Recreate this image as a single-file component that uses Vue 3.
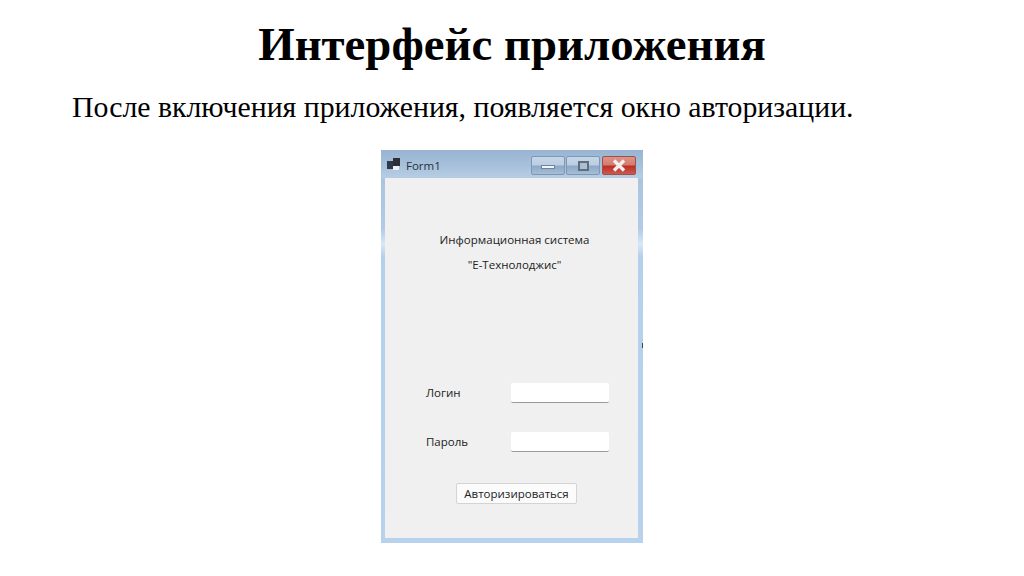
<script setup>
const heading = 'Интерфейс приложения'
const intro = 'После включения приложения, появляется окно авторизации.'
</script>

<template>
  <main class="slide">
    <h1 class="heading">{{ heading }}</h1>
    <p class="intro">{{ intro }}</p>
    <section class="window">
      <header class="titlebar">
        <svg class="app-icon" width="14" height="13" viewBox="0 0 14 13">
          <rect x="0" y="3" width="6" height="8" fill="#2e3a4c" />
          <rect x="6" y="0" width="7" height="8" fill="#2b2f3a" />
          <rect x="6" y="8" width="6" height="4" fill="#eef2f6" />
        </svg>
        <span class="title">Form1</span>
        <div class="controls">
          <span class="ctl"><i class="min"></i></span>
          <span class="ctl"><i class="max"></i></span>
          <span class="ctl close">
            <svg width="18" height="13" viewBox="0 0 18 13">
              <path d="M4 1.5 L14 11.5 M14 1.5 L4 11.5" stroke="#f4eeee" stroke-width="3.4" />
            </svg>
          </span>
        </div>
      </header>
      <div class="client">
        <div class="caption">
          <div>Информационная система</div>
          <div>"Е-Технолоджис"</div>
        </div>
        <div class="row row-login">
          <label>Логин</label>
          <div class="field"></div>
        </div>
        <div class="row row-pass">
          <label>Пароль</label>
          <div class="field"></div>
        </div>
        <div class="actions">
          <button class="submit" type="button">Авторизироваться</button>
        </div>
      </div>
      <span class="tick"></span>
    </section>
  </main>
</template>

<style>
html, body { margin: 0; background: #fff; }
</style>

<style scoped>
.slide {
  width: 1024px;
  height: 576px;
  overflow: hidden;
  display: flex;
  flex-direction: column;
  background: #fff;
  color: #000;
  font-family: "Liberation Serif", serif;
}
.heading {
  margin: 15px 0 0;
  height: 59px;
  line-height: 59px;
  font-size: 46.8px;
  font-weight: 700;
  text-align: center;
}
.intro {
  margin: 17px 0 0 72px;
  height: 32px;
  line-height: 32px;
  font-size: 29.8px;
}
.window {
  position: relative;
  box-sizing: border-box;
  width: 262px;
  height: 393px;
  margin: 27px auto 0;
  padding: 0 5px 5px 4px;
  display: flex;
  flex-direction: column;
  background: linear-gradient(#a9c0da 0, #b0cbe8 20%, #d8e8f6 24%, #b4d0ec 27%, #b8d2ee 100%);
  font-family: "Open Sans", "Noto Sans", sans-serif;
  color: #222;
}
.titlebar {
  height: 28px;
  margin: 0 -5px 0 -4px;
  padding: 0 7px 0 6px;
  display: flex;
  align-items: center;
  background: linear-gradient(#98b4d2, #a9c2dc 60%, #b7cde4);
}
.title {
  margin-left: 5px;
  padding-top: 2px;
  font-size: 11.5px;
  color: #26303c;
}
.controls {
  margin-left: auto;
  margin-top: 3px;
  display: flex;
  gap: 1px;
}
.ctl {
  box-sizing: border-box;
  width: 34px;
  height: 19px;
  border: 1px solid #7d98b6;
  border-radius: 2px;
  display: flex;
  align-items: center;
  justify-content: center;
  background: linear-gradient(#c6d6e8 0, #bccfe2 45%, #8ea9c7 55%, #a6bdd5 100%);
}
.min {
  width: 12px;
  height: 2px;
  margin-top: 3px;
  background: #f2f5f8;
  border: 1px solid #6d86a0;
}
.max {
  box-sizing: border-box;
  width: 11px;
  height: 10px;
  border: 2px solid #5f6f80;
  background: #aebfd0;
}
.close {
  margin-left: 1px;
  border-color: #a05048;
  background: linear-gradient(#dc9488 0, #d47c70 45%, #bc3024 55%, #cb5a50 100%);
}
.client {
  flex: 1;
  background: #f0f0f0;
  display: flex;
  flex-direction: column;
  font-size: 11.5px;
}
.caption {
  margin-top: 54px;
  padding-left: 6px;
  display: flex;
  flex-direction: column;
  gap: 9px;
  text-align: center;
  line-height: 16px;
}
.row {
  display: flex;
  align-items: center;
  height: 20px;
  padding-left: 41px;
}
.row-login { margin-top: 110px; }
.row-pass { margin-top: 29px; }
.row label { width: 85px; padding-bottom: 2px; }
.field {
  box-sizing: border-box;
  width: 98px;
  height: 20px;
  background: #fff;
  border-bottom: 1px solid #9a9a9a;
  border-radius: 2px;
}
.actions {
  margin-top: 31px;
  padding-left: 71px;
}
.submit {
  box-sizing: border-box;
  display: block;
  width: 121px;
  height: 21px;
  padding: 0;
  background: #fbfbfb;
  border: 1px solid #d4d4d4;
  border-radius: 2px;
  font: inherit;
  color: #222;
}
.tick {
  position: absolute;
  left: 261px;
  top: 193px;
  width: 1px;
  height: 5px;
  background: #444;
}
</style>
